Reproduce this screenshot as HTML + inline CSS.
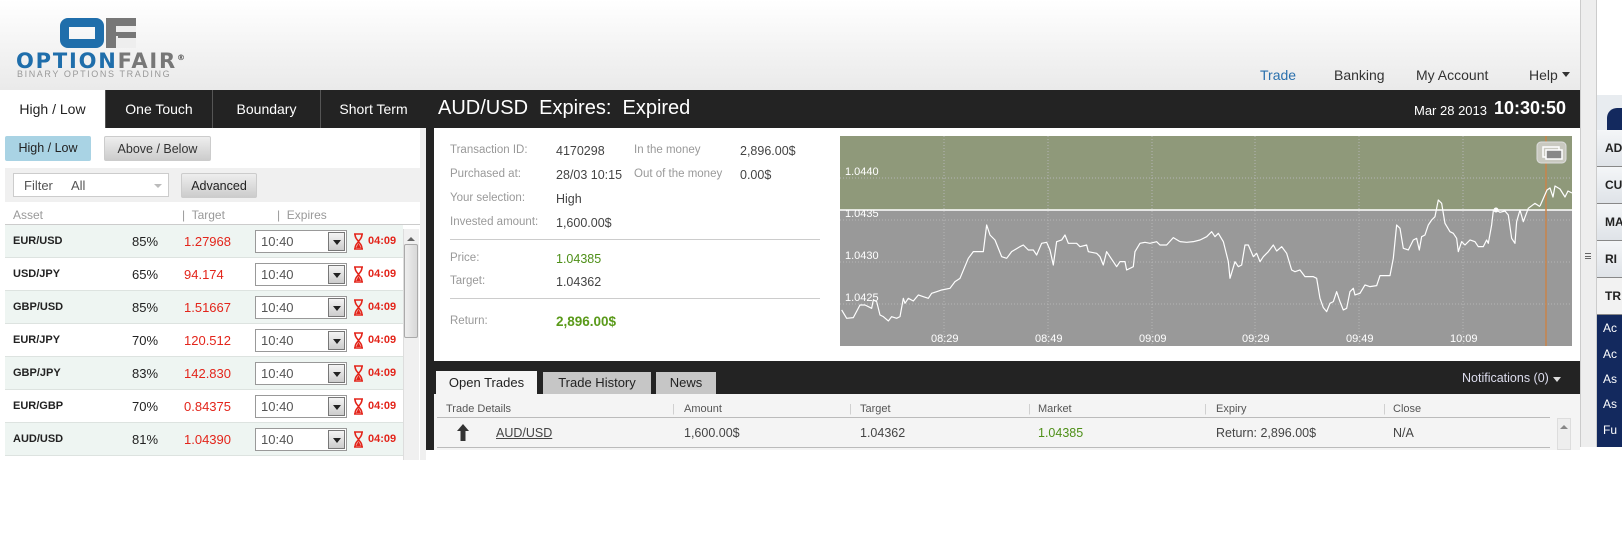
<!DOCTYPE html>
<html><head><meta charset="utf-8">
<style>
*{margin:0;padding:0;box-sizing:border-box}
body{width:1622px;height:540px;overflow:hidden;background:#fff;font-family:"Liberation Sans","DejaVu Sans",sans-serif;position:relative;color:#333}
.a{position:absolute;white-space:nowrap}
.hdr{left:0;top:0;width:1580px;height:90px;background:linear-gradient(#fff,#f0f0f0 70%,#eaeaea)}
.nav{font-size:14px;color:#333;top:67px}
.tab{top:90px;height:38px;background:#232323;color:#fff;font-size:14px;text-align:center;line-height:38px;border-left:1px solid #555}
.btn{font-size:12.5px;text-align:center;line-height:25px;border-radius:2px}
.row{left:5px;width:398px;height:33px;border-bottom:1px solid #dde3e0;font-size:13px}
.row .as{position:absolute;left:8px;top:10px;font-size:11px;font-weight:bold;color:#222}
.row .pc{position:absolute;left:127px;top:9px;color:#222}
.row .tg{position:absolute;left:179px;top:9px;color:#e3251b}
.row .sel{position:absolute;left:250px;top:5px;width:92px;height:23px;border:1px solid #999;background:#fff;color:#555;font-size:13px;padding:3px 0 0 5px}
.row .sel i{position:absolute;right:1px;top:1px;width:17px;height:19px;border:1px solid #777;background:linear-gradient(#f4f4f4,#ccc)}
.row .sel i:after{content:"";position:absolute;left:4px;top:7px;border:4px solid transparent;border-top:5px solid #222}
.row .hg{position:absolute;left:348px;top:8px}
.row .tm{position:absolute;left:363px;top:10px;color:#e3251b;font-weight:bold;font-size:11px}
.lb{font-size:11.5px;color:#999}
.vl{font-size:12.5px;color:#444}
.th{font-size:11px;color:#555;top:403px}
.sb{left:1597px;width:25px;height:37px;background:linear-gradient(#f4f6f8,#dfe3e8);border-bottom:1px solid #888;font-size:12px;font-weight:bold;color:#222;padding:11px 0 0 8px}
.nv{left:1603px;color:#fff;font-size:12px}
</style></head><body>
<div class="a hdr"></div>
<!-- logo -->
<div class="a" style="left:60px;top:18px;width:44px;height:30px;border:9px solid #1f6eab;border-radius:8px"></div>
<div class="a" style="left:106px;top:18px;width:30px;height:30px;background:#777"></div>
<div class="a" style="left:116px;top:26px;width:20px;height:6px;background:#eee"></div>
<div class="a" style="left:116px;top:36px;width:20px;height:12px;background:#eee"></div>
<div class="a" style="left:118px;top:35px;width:18px;height:3px;background:#777"></div>
<div class="a" style="left:16px;top:49px;font-size:21px;font-weight:900;letter-spacing:1.8px;color:#1f6eab;font-family:'DejaVu Sans',sans-serif">OPTION<span style="color:#777">FAIR</span><sup style="font-size:8px;color:#555">®</sup></div>
<div class="a" style="left:17px;top:69px;font-size:9px;color:#999;letter-spacing:1.6px">BINARY OPTIONS TRADING</div>
<div class="a nav" style="left:1260px;color:#2a70ad">Trade</div>
<div class="a nav" style="left:1334px">Banking</div>
<div class="a nav" style="left:1416px">My Account</div>
<div class="a nav" style="left:1529px">Help</div>
<div class="a" style="left:1562px;top:72px;border:4px solid transparent;border-top:5px solid #333"></div>
<!-- left panel -->
<div class="a" style="left:0;top:90px;width:426px;height:370px;background:#f0f0f0"></div>
<div class="a" style="left:0;top:128px;width:420px;height:332px;background:#fff"></div>
<div class="a tab" style="left:0;width:105px;background:#fff;color:#222;border:none">High / Low</div>
<div class="a tab" style="left:105px;width:107px">One Touch</div>
<div class="a tab" style="left:212px;width:108px">Boundary</div>
<div class="a tab" style="left:320px;width:106px">Short Term</div>
<div class="a btn" style="left:5px;top:136px;width:86px;height:25px;background:#a9d3e4;color:#222">High / Low</div>
<div class="a btn" style="left:104px;top:136px;width:107px;height:25px;background:linear-gradient(#eee,#ccc);border:1px solid #ccc;color:#333">Above / Below</div>
<div class="a" style="left:5px;top:168px;width:415px;height:34px;background:#f0f0f0"></div>
<div class="a" style="left:13px;top:173px;width:156px;height:24px;background:#fff;border:1px solid #ccc;font-size:13px;color:#555;padding:4px 0 0 10px">Filter&nbsp;&nbsp;&nbsp;&nbsp;&nbsp;All</div>
<div class="a" style="left:154px;top:184px;border:4px solid transparent;border-top:4px solid #bbb"></div>
<div class="a btn" style="left:181px;top:173px;width:76px;height:25px;background:linear-gradient(#eee,#ccc);border:1px solid #ccc;color:#222">Advanced</div>
<div class="a" style="left:13px;top:208px;font-size:12px;color:#999">Asset</div>
<div class="a" style="left:182px;top:208px;font-size:12px;color:#999">|&nbsp; Target</div>
<div class="a" style="left:277px;top:208px;font-size:12px;color:#999">|&nbsp; Expires</div>
<div class="a" style="left:5px;top:224px;width:415px;border-top:1px solid #ccc"></div>
<div id="rows"></div>
<div class="a" style="left:403px;top:229px;width:16px;height:231px;background:#f0f0f0;border-left:1px solid #ddd"></div>
<div class="a" style="left:404px;top:244px;width:14px;height:94px;background:linear-gradient(90deg,#eee,#d8d8d8);border:1px solid #aaa;border-radius:2px"></div>
<div class="a" style="left:407px;top:233px;border:4px solid transparent;border-bottom:4px solid #666"></div>
<!-- divider -->
<div class="a" style="left:426px;top:90px;width:8px;height:360px;background:#232323"></div>
<!-- right panel -->
<div class="a" style="left:426px;top:90px;width:1154px;height:38px;background:#232323"></div>
<div class="a" style="left:438px;top:97px;font-size:20px;color:#fff">AUD/USD&nbsp;&nbsp;Expires:&nbsp; Expired</div>
<div class="a" style="left:1414px;top:103px;font-size:13px;color:#fff">Mar 28 2013</div>
<div class="a" style="left:1494px;top:98px;font-size:18px;font-weight:bold;color:#fff">10:30:50</div>
<div class="a lb" style="left:450px;top:144px">Transaction ID:</div><div class="a vl" style="left:556px;top:144px">4170298</div>
<div class="a lb" style="left:634px;top:144px">In the money</div><div class="a vl" style="left:740px;top:144px">2,896.00$</div>
<div class="a lb" style="left:450px;top:168px">Purchased at:</div><div class="a vl" style="left:556px;top:168px">28/03 10:15</div>
<div class="a lb" style="left:634px;top:168px">Out of the money</div><div class="a vl" style="left:740px;top:168px">0.00$</div>
<div class="a lb" style="left:450px;top:192px">Your selection:</div><div class="a vl" style="left:556px;top:192px">High</div>
<div class="a lb" style="left:450px;top:216px">Invested amount:</div><div class="a vl" style="left:556px;top:216px">1,600.00$</div>
<div class="a" style="left:450px;top:239px;width:370px;border-top:1px solid #ccc"></div>
<div class="a lb" style="left:450px;top:252px">Price:</div><div class="a vl" style="left:556px;top:252px;color:#4e8f18">1.04385</div>
<div class="a lb" style="left:450px;top:275px">Target:</div><div class="a vl" style="left:556px;top:275px">1.04362</div>
<div class="a" style="left:450px;top:298px;width:370px;border-top:1px solid #ccc"></div>
<div class="a lb" style="left:450px;top:315px">Return:</div><div class="a" style="left:556px;top:314px;font-size:13.5px;font-weight:bold;color:#5a9a1a">2,896.00$</div>
<svg class="a" style="left:0;top:0" width="1622" height="540">
<rect x="840" y="136" width="732" height="74" fill="#8f997a"/>
<rect x="840" y="210" width="732" height="136" fill="#999"/>
<g stroke="#b5b5b5" stroke-dasharray="1 2" stroke-width="1">
<line x1="840" y1="178" x2="1572" y2="178"/><line x1="840" y1="220" x2="1572" y2="220"/><line x1="840" y1="262" x2="1572" y2="262"/><line x1="840" y1="304" x2="1572" y2="304"/>
<line x1="944" y1="136" x2="944" y2="346"/><line x1="1048" y1="136" x2="1048" y2="346"/><line x1="1152" y1="136" x2="1152" y2="346"/><line x1="1255" y1="136" x2="1255" y2="346"/><line x1="1359" y1="136" x2="1359" y2="346"/><line x1="1463" y1="136" x2="1463" y2="346"/>
</g>
<line x1="840" y1="210" x2="1572" y2="210" stroke="#fff" stroke-width="1.5"/>
<line x1="1546" y1="136" x2="1546" y2="346" stroke="#c8844a" stroke-width="1.5"/>
<g fill="#fff" font-family="Liberation Sans,sans-serif" font-size="11">
<text x="845" y="175">1.0440</text><text x="845" y="217">1.0435</text><text x="845" y="259">1.0430</text><text x="845" y="301">1.0425</text>
<text x="931" y="342">08:29</text><text x="1035" y="342">08:49</text><text x="1139" y="342">09:09</text><text x="1242" y="342">09:29</text><text x="1346" y="342">09:49</text><text x="1450" y="342">10:09</text>
</g>
<g fill="none" stroke="#fff" stroke-width="1.2" stroke-linejoin="round">
<polyline transform="translate(820,125) scale(0.3333)" vector-effect="non-scaling-stroke" points="65,555 80,580 100,578 120,540 135,540 155,550 160,525 170,530 180,570 190,575 205,588 215,575 230,580 240,575 250,520 255,535 265,520 280,528 295,510 310,515 325,520 335,505 350,500 365,495 390,490 405,470 420,460 445,400 460,380 485,380 490,380 500,300 510,330 525,345 545,395 560,400 575,380 600,365 610,360 625,375 640,375 650,390 665,355 680,352 690,375 700,420 710,350 725,345 735,330 745,355 770,355 780,365 800,360 805,380 830,385 840,395 850,420 860,380 870,395 890,425 900,410 915,410 920,435 940,425 945,380 960,355 975,352 990,355 1010,350 1020,360 1040,360 1060,338 1080,350"/>
<polyline transform="translate(1180,125) scale(0.3333)" vector-effect="non-scaling-stroke" points="0,350 20,352 40,350 60,345 80,335 95,320 105,335 115,325 130,350 145,410 150,460 165,410 175,425 185,420 195,360 205,360 220,395 230,385 240,410 250,395 265,380 280,360 290,378 305,365 320,385 335,435 345,440 360,435 375,455 400,455 410,460 420,520 430,548 440,560 450,535 460,530 470,500 480,530 490,555 500,550 510,500 520,490 525,510 540,505 555,480 570,485 590,482 600,452 630,452 640,400 650,300 660,310 670,370 685,375 700,345 710,340 718,375 725,335 735,330 745,300 755,285 765,275 775,225 785,235 795,295 810,320 820,325 830,340 835,380 845,350 855,360 870,345 885,350 895,365 910,365 920,345 925,355 935,300 940,258 950,255 960,262 975,258 985,270 995,340 1005,355 1010,290 1020,255 1030,290 1045,250 1065,235 1080,245"/>
<polyline points="1540,206 1547,190 1550,188 1553,197 1555,186 1560,189 1565,197 1568,191 1572,193"/>
</g>
<circle cx="1496" cy="210" r="2.5" fill="#fff"/>
<rect x="1537" y="142" width="29" height="21" rx="4" fill="#c9c9c0" stroke="#ddd"/>
<rect x="1543" y="147" width="16" height="10" fill="none" stroke="#fff" stroke-width="1.5"/>
<rect x="1546" y="150" width="16" height="9" fill="#888" stroke="#fff" stroke-width="1.5"/>
</svg>
<!-- bottom section -->
<div class="a" style="left:426px;top:361px;width:1154px;height:33px;background:#232323"></div>
<div class="a" style="left:436px;top:371px;width:101px;height:24px;background:#f4f4f4;font-size:13px;color:#222;text-align:center;line-height:24px">Open Trades</div>
<div class="a" style="left:543px;top:372px;width:108px;height:22px;background:#c6c6c6;font-size:13px;color:#222;text-align:center;line-height:22px">Trade History</div>
<div class="a" style="left:656px;top:372px;width:60px;height:22px;background:#c6c6c6;font-size:13px;color:#222;text-align:center;line-height:22px">News</div>
<div class="a" style="left:1462px;top:371px;font-size:12.5px;color:#dde">Notifications (0)</div>
<div class="a" style="left:1553px;top:377px;border:4px solid transparent;border-top:5px solid #ddd"></div>
<div class="a" style="left:434px;top:394px;width:1146px;height:56px;background:#f4f4f4"></div>
<div class="a th" style="left:446px">Trade Details</div>
<div class="a th" style="left:672px;color:#ccc">|</div><div class="a th" style="left:684px">Amount</div>
<div class="a th" style="left:849px;color:#ccc">|</div><div class="a th" style="left:860px">Target</div>
<div class="a th" style="left:1028px;color:#ccc">|</div><div class="a th" style="left:1038px">Market</div>
<div class="a th" style="left:1204px;color:#ccc">|</div><div class="a th" style="left:1216px">Expiry</div>
<div class="a th" style="left:1383px;color:#ccc">|</div><div class="a th" style="left:1393px">Close</div>
<div class="a" style="left:437px;top:417px;width:1113px;border-top:1px solid #bbb"></div>
<div class="a" style="left:437px;top:447px;width:1113px;border-top:1px solid #bbb"></div>
<svg class="a" style="left:457px;top:424px" width="12" height="18"><path d="M6 0 L12 7 L8.5 7 L8.5 17 L3.5 17 L3.5 7 L0 7 Z" fill="#333"/></svg>
<div class="a" style="left:496px;top:426px;font-size:12.5px;color:#444;text-decoration:underline">AUD/USD</div>
<div class="a vl" style="left:684px;top:426px">1,600.00$</div>
<div class="a vl" style="left:860px;top:426px">1.04362</div>
<div class="a vl" style="left:1038px;top:426px;color:#4e8f18">1.04385</div>
<div class="a vl" style="left:1216px;top:426px">Return: 2,896.00$</div>
<div class="a vl" style="left:1393px;top:426px">N/A</div>
<div class="a" style="left:1557px;top:418px;width:14px;height:32px;background:#eee;border:1px solid #ddd"></div>
<div class="a" style="left:1560px;top:421px;border:4px solid transparent;border-bottom:4px solid #888"></div>
<!-- right scroll strip + sidebar -->
<div class="a" style="left:1580px;top:0;width:17px;height:447px;background:#eee;border-left:1px solid #ccc;border-right:1px solid #ccc"></div>
<div class="a" style="left:1585px;top:253px;width:6px;height:6px;border-top:1px solid #666;border-bottom:1px solid #666"></div>
<div class="a" style="left:1585px;top:256px;width:6px;border-top:1px solid #666"></div>
<div class="a" style="left:1597px;top:95px;width:25px;height:35px;background:#e8ecf0"></div>
<div class="a" style="left:1607px;top:108px;width:20px;height:22px;background:#13295e;border-radius:10px 0 0 0"></div>
<div class="a sb" style="top:130px">AD</div>
<div class="a sb" style="top:167px">CU</div>
<div class="a sb" style="top:204px">MA</div>
<div class="a sb" style="top:241px">RI</div>
<div class="a sb" style="top:278px;background:#f2f2f2">TR</div>
<div class="a" style="left:1597px;top:315px;width:25px;height:132px;background:#13295e"></div>
<div class="a nv" style="top:321px">Ac</div>
<div class="a nv" style="top:347px">Ac</div>
<div class="a nv" style="top:372px">As</div>
<div class="a nv" style="top:397px">As</div>
<div class="a nv" style="top:423px">Fu</div>
<script>
var d=[["EUR/USD","85%","1.27968"],["USD/JPY","65%","94.174"],["GBP/USD","85%","1.51667"],["EUR/JPY","70%","120.512"],["GBP/JPY","83%","142.830"],["EUR/GBP","70%","0.84375"],["AUD/USD","81%","1.04390"]];
var h="";
d.forEach(function(r,i){h+='<div class="a row" style="top:'+(225+i*33)+'px;background:'+(i%2?'#fff':'#eef5f2')+'"><span class="as">'+r[0]+'</span><span class="pc">'+r[1]+'</span><span class="tg">'+r[2]+'</span><div class="sel">10:40<i></i></div><svg class="hg" width="11" height="17"><path d="M1 1H10M1 16H10M2 1C2 6 5 7 5.5 8.5C6 10 9 11 9 16M9 1C9 6 6 7 5.5 8.5C5 10 2 11 2 16" fill="none" stroke="#e3251b" stroke-width="1.6"/><path d="M3 15L5.5 10L8 15Z" fill="#e3251b"/></svg><span class="tm">04:09</span></div>';});
document.getElementById("rows").innerHTML=h;
</script>
</body></html>
